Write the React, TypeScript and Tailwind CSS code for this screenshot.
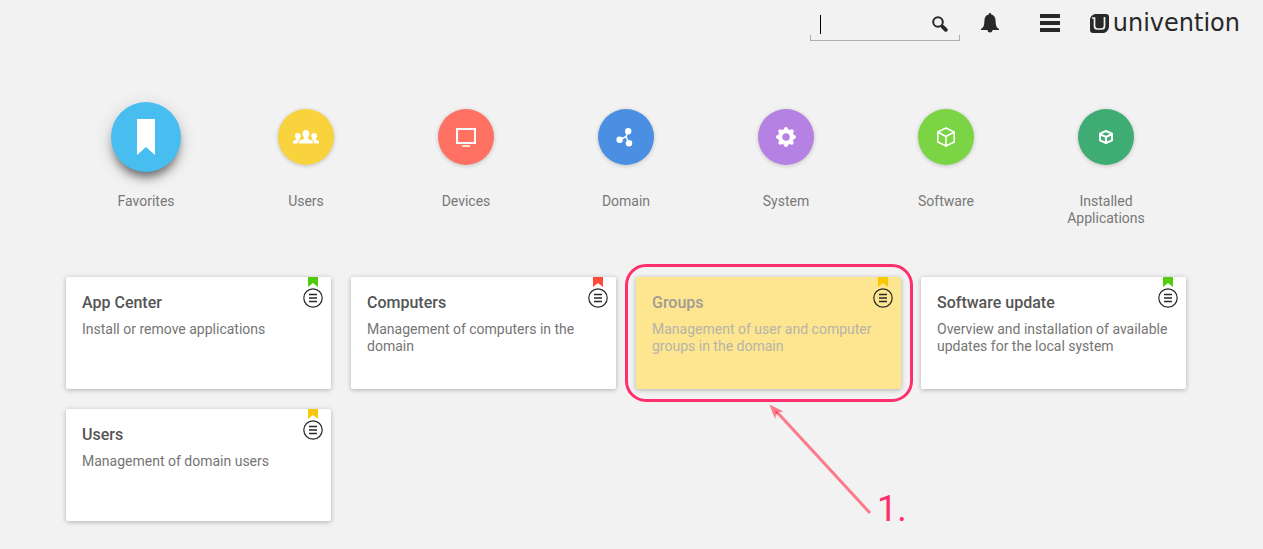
import type { ReactNode } from "react";

type Category = {
  name: string;
  color: string;
  active?: boolean;
  icon: ReactNode;
};

const categories: Category[] = [
  {
    name: "Favorites",
    color: "bg-[#48bef0]",
    active: true,
    icon: (
      <svg width="18" height="36" viewBox="0 0 18 36" fill="#fff" aria-hidden="true">
        <path d="M0 0H18V36L9 28L0 36Z" />
      </svg>
    ),
  },
  {
    name: "Users",
    color: "bg-[#f9d33e]",
    icon: (
      <svg width="28" height="16" viewBox="0 0 28 16" fill="#fff" aria-hidden="true">
        <path d="M14 1C16.200 1 17.500 2.400 17.400 4.700C17.400 6.500 16.700 7.600 16 8.300V9.700C17 10.800 20.600 10.800 20.900 12.600V14.500H7.100V12.600C7.400 10.800 11 10.800 12 9.700V8.300C11.300 7.600 10.600 6.500 10.600 4.700C10.500 2.400 11.800 1 14 1Z" />
        <path d="M5.800 4C7.900 4 8.800 5.200 8.700 7C8.700 8.300 8.200 9 7.600 9.700V10.600L8.200 10.800C6.800 11.400 6.100 12 6 13.900V14.500H1V12.800C1.200 11.300 3.500 11.500 4.200 10.600V9.700C3.500 9 3 8.300 3 7C2.900 5.200 3.800 4 5.800 4Z" />
        <path d="M22.200 4C20.100 4 19.200 5.200 19.300 7C19.300 8.300 19.800 9 20.400 9.700V10.600L19.800 10.800C21.200 11.400 21.900 12 22 13.900V14.500H27V12.800C26.800 11.300 24.500 11.500 23.800 10.600V9.700C24.500 9 25 8.300 25 7C25.100 5.200 24.200 4 22.200 4Z" />
      </svg>
    ),
  },
  {
    name: "Devices",
    color: "bg-[#ff7163]",
    icon: (
      <svg width="20" height="20" viewBox="0 0 20 20" fill="none" aria-hidden="true">
        <path d="M1 2H19V16H1Z" stroke="#fff" strokeWidth="2" />
        <path d="M6 19H14" stroke="#fff" strokeWidth="1.500" />
      </svg>
    ),
  },
  {
    name: "Domain",
    color: "bg-[#4b8fe3]",
    icon: (
      <svg width="20" height="20" viewBox="0 0 20 20" fill="#fff" aria-hidden="true">
        <path d="M3.500 12.800L10 9.800L12.200 4M10 9.800L13 16.200" stroke="#fff" strokeWidth="1.500" fill="none" />
        <circle cx="12.200" cy="4.200" r="3.200" />
        <circle cx="3.600" cy="12.800" r="3.200" />
        <circle cx="13" cy="16.200" r="3.200" />
      </svg>
    ),
  },
  {
    name: "System",
    color: "bg-[#b581e3]",
    icon: (
      <svg width="20" height="20" viewBox="0 0 20 20" fill="#fff" aria-hidden="true">
        <circle cx="10" cy="10" r="5.900" fill="none" stroke="#fff" strokeWidth="4.200" />
        <circle cx="10" cy="2" r="2" />
        <circle cx="15.700" cy="4.300" r="2" />
        <circle cx="18" cy="10" r="2" />
        <circle cx="15.700" cy="15.700" r="2" />
        <circle cx="10" cy="18" r="2" />
        <circle cx="4.300" cy="15.700" r="2" />
        <circle cx="2" cy="10" r="2" />
        <circle cx="4.300" cy="4.300" r="2" />
      </svg>
    ),
  },
  {
    name: "Software",
    color: "bg-[#7ad444]",
    icon: (
      <svg width="20" height="20" viewBox="0 0 20 20" fill="none" stroke="#fff" strokeWidth="1.500" strokeLinejoin="round" aria-hidden="true">
        <path d="M10 1L18.200 5V15L10 19L1.800 15V5ZM1.800 5L10 9.500L18.200 5M10 9.500V19" />
      </svg>
    ),
  },
  {
    name: "Installed Applications",
    color: "bg-[#3fad73]",
    icon: (
      <svg width="14" height="14" viewBox="0 0 14 14" fill="none" stroke="#fff" strokeWidth="2" strokeLinejoin="round" aria-hidden="true">
        <path d="M7 1L13 3.700V10.300L7 13L1 10.300V3.700ZM1.500 4.300L7 7L12.500 4.300M7 7V13" />
      </svg>
    ),
  },
];

type App = {
  title: string;
  text: string;
  mark: string;
  selected?: boolean;
};

const apps: App[] = [
  { title: "App Center", text: "Install or remove applications", mark: "fill-[#52cb0d]" },
  { title: "Computers", text: "Management of computers in the domain", mark: "fill-[#ff4a35]" },
  { title: "Groups", text: "Management of user and computer groups in the domain", mark: "fill-[#f9c800]", selected: true },
  { title: "Software update", text: "Overview and installation of available updates for the local system", mark: "fill-[#52cb0d]" },
  { title: "Users", text: "Management of domain users", mark: "fill-[#f9c80a]" },
];

function Header() {
  return (
    <header className="flex h-[46px] items-start justify-end pr-[23px] text-[#282828]">
      <form role="search" className="relative mr-[10px] flex h-[41px] w-[150px] items-center" onSubmit={(e) => e.preventDefault()}>
        <input type="text" aria-label="Search" className="h-full w-full bg-transparent pr-9 pl-[10px] text-sm outline-none" />
        <span className="pointer-events-none absolute top-[15px] left-[10px] h-[19px] w-px bg-black" />
        <span className="pointer-events-none absolute inset-x-0 bottom-0 h-[6px] border border-t-0 border-[#aeaeae]" />
        <button type="submit" aria-label="Start search" className="absolute top-4 right-3">
          <svg width="16" height="16" viewBox="0 0 16 16" fill="none" stroke="currentColor" aria-hidden="true">
            <circle cx="6" cy="6" r="4.800" strokeWidth="2" />
            <path d="M9.500 9.500L10.800 10.800" strokeWidth="2" />
            <path d="M10.800 10.800L13.800 13.800" strokeWidth="3.800" strokeLinecap="round" />
          </svg>
        </button>
      </form>
      <button type="button" aria-label="Notifications" className="flex h-[46px] w-10 items-center justify-center">
        <svg width="18" height="20" viewBox="0 0 18 20" fill="currentColor" aria-hidden="true">
          <path d="M9 0C9.800 0 10.200 0.500 10.300 1.500C13.300 2.200 14.500 4.500 14.600 8C14.800 12.500 15.300 14.300 18 16V17H11.600C11.300 18.700 10.300 19.500 9 19.500S6.700 18.700 6.400 17H0V16C2.700 14.300 3.200 12.500 3.400 8C3.500 4.500 4.700 2.200 7.700 1.500C7.800 0.500 8.200 0 9 0Z" />
        </svg>
      </button>
      <button type="button" aria-label="Menu" className="ml-5 flex h-[46px] w-10 items-center justify-center">
        <svg width="20" height="18" viewBox="0 0 20 18" fill="currentColor" aria-hidden="true">
          <path d="M0 0H20V4H0ZM0 7H20V11H0ZM0 14H20V18H0Z" />
        </svg>
      </button>
      <a href="#" className="ml-5 flex h-[46px] items-center gap-1">
        <svg width="19" height="19" viewBox="0 0 19 19" aria-hidden="true">
          <path fill="currentColor" d="M5 0H16Q19 0 19 3V13Q18 18 14 19H3Q0 19 0 16V5Q1 1 5 0Z" />
          <path fill="none" stroke="#f2f2f2" strokeWidth="1.700" d="M2 4H4.500V12Q4.500 15 7.500 15H11.500Q14.500 15 14.500 12V3" />
        </svg>
        <span className="font-['DejaVu_Sans',sans-serif] text-[24px] leading-[46px]">univention</span>
      </a>
    </header>
  );
}

function CategoryButton({ name, color, active, icon }: Category) {
  return (
    <button type="button" className="flex flex-col items-center">
      <span className="flex h-[70px] items-center">
        <span
          className={`flex items-center justify-center rounded-full ${color} ${
            active ? "size-[70px] shadow-[0_8px_10px_-3px_rgba(0,0,0,0.5),0_4px_18px_rgba(0,0,0,0.16)]" : "size-14 shadow-[0_1px_4px_rgba(0,0,0,0.2)]"
          }`}
        >
          {icon}
        </span>
      </span>
      <span className="mt-[21px] w-24 text-sm leading-[17px] text-[#787878]">{name}</span>
    </button>
  );
}

function Annotation() {
  return (
    <div className="pointer-events-none">
      <div className="absolute -inset-y-[13px] -right-3 -left-[11px] rounded-[21px] border-3 border-[#ff2e6c]" />
      <svg className="absolute top-[124px] left-[130px]" width="112" height="120" viewBox="0 0 112 120" aria-hidden="true">
        <path d="M10 10L104 112" stroke="#fb7b8d" strokeWidth="3" />
        <path d="M3.500 3.500L17.500 10.500L10.500 11.500L9 18Z" fill="#fb7b8d" />
        <path d="M9 10L12 11L11 14Z" fill="#ff3e63" />
      </svg>
      <span className="absolute top-[212px] left-[241px] font-[Roboto,sans-serif] text-[36px] leading-10 text-[#ff2e6c]">1.</span>
    </div>
  );
}

function AppCard({ title, text, mark, selected }: App) {
  return (
    <article className={`relative min-h-28 rounded-[2px] p-4 shadow-[0_1px_5px_rgba(0,0,0,0.28)] ${selected ? "bg-[#fde68f]" : "bg-white"}`}>
      <h2 className={`text-base leading-[19px] font-medium ${selected ? "text-[#a19d95]" : "text-[#555]"}`}>{title}</h2>
      <p className={`mt-[9px] text-sm leading-[17px] ${selected ? "text-[#b7b3aa]" : "text-[#757575]"}`}>{text}</p>
      <svg className={`absolute top-0 right-[13px] ${mark}`} width="10" height="10" viewBox="0 0 10 10" aria-hidden="true">
        <path d="M0 0H10V10L5 6L0 10Z" />
      </svg>
      <button type="button" aria-label={`${title} menu`} className="absolute top-[11px] right-2">
        <svg width="20" height="20" viewBox="0 0 20 20" fill="none" stroke="#282828" aria-hidden="true">
          <circle cx="10" cy="10" r="9.200" strokeWidth="1.200" />
          <path d="M6 6.500H14M6 10H14M6 13.500H14" strokeWidth="1.400" />
        </svg>
      </button>
      {selected && <Annotation />}
    </article>
  );
}

export default function App() {
  return (
    <div className="min-h-screen bg-[#f2f2f2] font-[Roboto,sans-serif]">
      <Header />
      <main className="pt-14 pr-[11px] pb-7">
        <div className="mx-auto max-w-[1120px]">
          <nav aria-label="Categories" className="grid grid-cols-7 items-start">
            {categories.map((category) => (
              <CategoryButton key={category.name} {...category} />
            ))}
          </nav>
          <section aria-label="Applications" className="mt-[50px] grid grid-cols-4 gap-5">
            {apps.map((app) => (
              <AppCard key={app.title} {...app} />
            ))}
          </section>
        </div>
      </main>
    </div>
  );
}
